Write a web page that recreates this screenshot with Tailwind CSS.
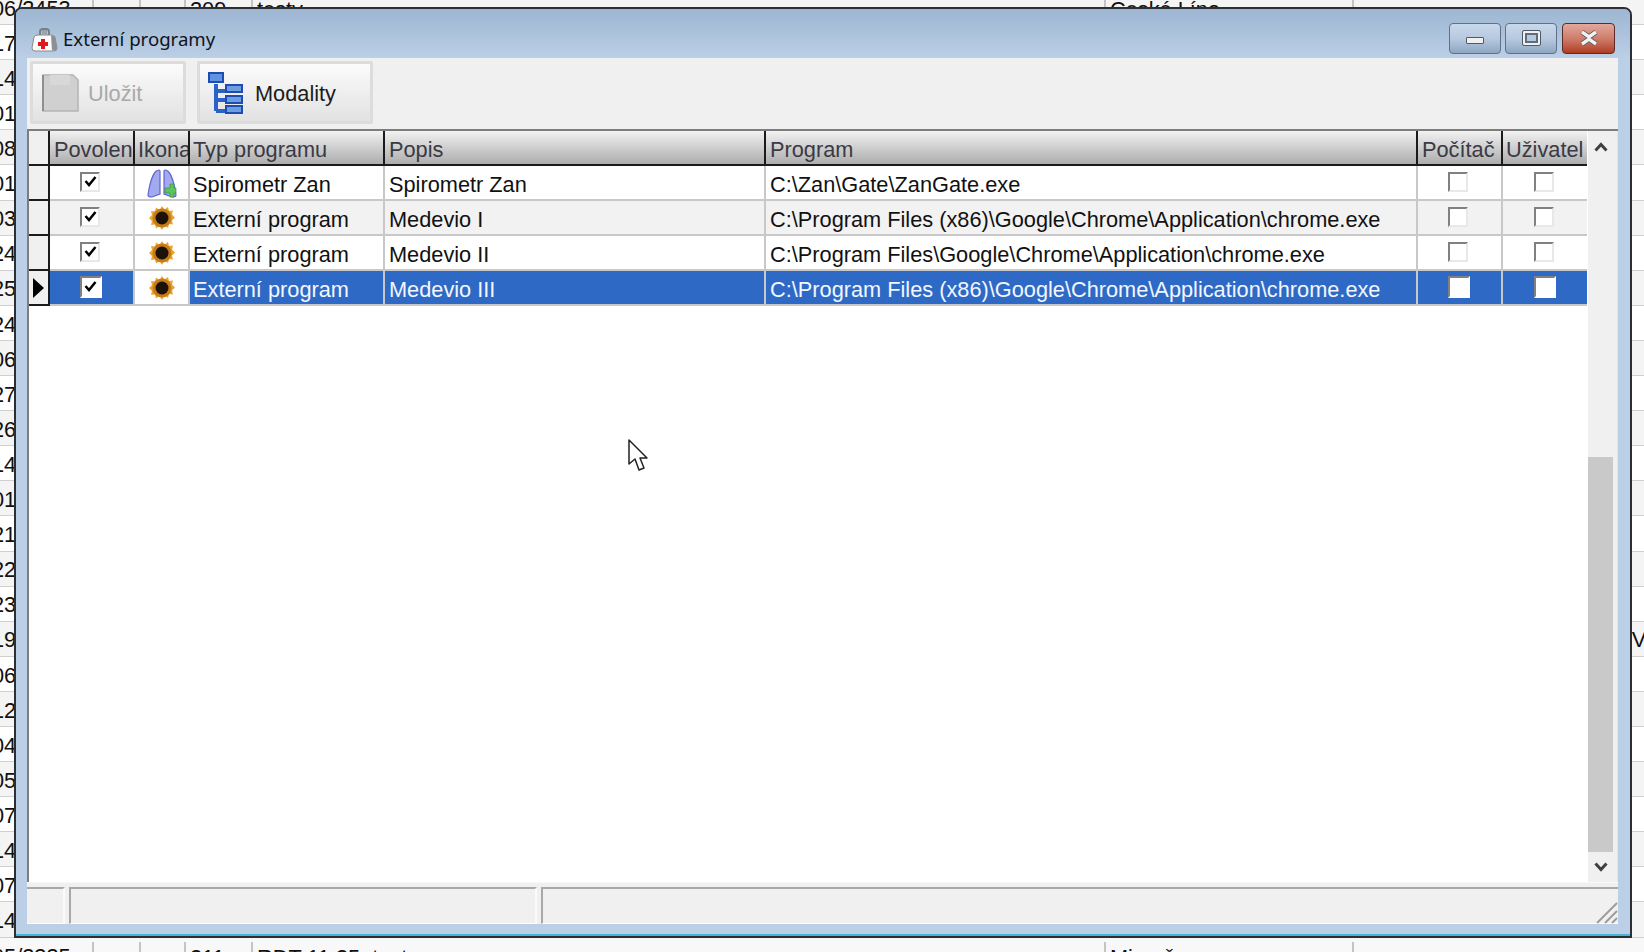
<!DOCTYPE html>
<html lang="cs">
<head>
<meta charset="utf-8">
<title>Externí programy</title>
<script src="https://cdn.jsdelivr.net/npm/@tailwindcss/browser@4"></script>
</head>
<body class="relative h-[952px] w-[1644px] overflow-hidden bg-white font-['Liberation_Sans',Arial,sans-serif] text-[21.75px] text-[#111]">

<!-- spreadsheet behind the dialog -->
<div class="-mt-[10px] flex flex-col">
  <div class="flex h-[35.1px] items-center border-b border-[#d0d0d0] bg-[#f4f4f4] pt-1"><span class="-ml-2 w-[100px]">06/2453</span><span class="w-[47px] self-stretch border-l-2 border-[#c4c4c4]"></span><span class="w-[45px] self-stretch border-l-2 border-[#c4c4c4]"></span><span class="w-[67px] self-stretch border-l-2 border-[#c4c4c4] pl-1 leading-[31px]">209</span><span class="w-[853px] self-stretch border-l-2 border-[#c4c4c4] pl-1 leading-[31px]">testy</span><span class="w-[248px] self-stretch border-l-2 border-[#c4c4c4] pl-1 leading-[31px]">České Lípa</span><span class="flex-1 self-stretch border-l-2 border-[#c4c4c4]"></span></div>
  <div class="flex h-[35.1px] items-center border-b border-[#d0d0d0] bg-white pt-1"><span class="-ml-2">17/2417</span></div>
  <div class="flex h-[35.1px] items-center border-b border-[#d0d0d0] bg-[#f4f4f4] pt-1"><span class="-ml-2">14/2414</span></div>
  <div class="flex h-[35.1px] items-center border-b border-[#d0d0d0] bg-white pt-1"><span class="-ml-2">01/2401</span></div>
  <div class="flex h-[35.1px] items-center border-b border-[#d0d0d0] bg-[#f4f4f4] pt-1"><span class="-ml-2">08/2408</span></div>
  <div class="flex h-[35.1px] items-center border-b border-[#d0d0d0] bg-white pt-1"><span class="-ml-2">01/2401</span></div>
  <div class="flex h-[35.1px] items-center border-b border-[#d0d0d0] bg-[#f4f4f4] pt-1"><span class="-ml-2">03/2403</span></div>
  <div class="flex h-[35.1px] items-center border-b border-[#d0d0d0] bg-white pt-1"><span class="-ml-2">24/2424</span></div>
  <div class="flex h-[35.1px] items-center border-b border-[#d0d0d0] bg-[#f4f4f4] pt-1"><span class="-ml-2">25/2425</span></div>
  <div class="flex h-[35.1px] items-center border-b border-[#d0d0d0] bg-white pt-1"><span class="-ml-2">24/2424</span></div>
  <div class="flex h-[35.1px] items-center border-b border-[#d0d0d0] bg-[#f4f4f4] pt-1"><span class="-ml-2">06/2406</span></div>
  <div class="flex h-[35.1px] items-center border-b border-[#d0d0d0] bg-white pt-1"><span class="-ml-2">27/2427</span></div>
  <div class="flex h-[35.1px] items-center border-b border-[#d0d0d0] bg-[#f4f4f4] pt-1"><span class="-ml-2">26/2426</span></div>
  <div class="flex h-[35.1px] items-center border-b border-[#d0d0d0] bg-white pt-1"><span class="-ml-2">14/2414</span></div>
  <div class="flex h-[35.1px] items-center border-b border-[#d0d0d0] bg-[#f4f4f4] pt-1"><span class="-ml-2">01/2401</span></div>
  <div class="flex h-[35.1px] items-center border-b border-[#d0d0d0] bg-white pt-1"><span class="-ml-2">21/2421</span></div>
  <div class="flex h-[35.1px] items-center border-b border-[#d0d0d0] bg-[#f4f4f4] pt-1"><span class="-ml-2">22/2422</span></div>
  <div class="flex h-[35.1px] items-center border-b border-[#d0d0d0] bg-white pt-1"><span class="-ml-2">23/2423</span></div>
  <div class="flex h-[35.1px] items-center justify-between border-b border-[#d0d0d0] bg-[#f4f4f4] pt-1"><span class="-ml-2">19/2419</span><span class="-mr-[7px]">Vl</span></div>
  <div class="flex h-[35.1px] items-center border-b border-[#d0d0d0] bg-white pt-1"><span class="-ml-2">06/2406</span></div>
  <div class="flex h-[35.1px] items-center border-b border-[#d0d0d0] bg-[#f4f4f4] pt-1"><span class="-ml-2">12/2412</span></div>
  <div class="flex h-[35.1px] items-center border-b border-[#d0d0d0] bg-white pt-1"><span class="-ml-2">04/2404</span></div>
  <div class="flex h-[35.1px] items-center border-b border-[#d0d0d0] bg-[#f4f4f4] pt-1"><span class="-ml-2">05/2405</span></div>
  <div class="flex h-[35.1px] items-center border-b border-[#d0d0d0] bg-white pt-1"><span class="-ml-2">07/2407</span></div>
  <div class="flex h-[35.1px] items-center border-b border-[#d0d0d0] bg-[#f4f4f4] pt-1"><span class="-ml-2">14/2414</span></div>
  <div class="flex h-[35.1px] items-center border-b border-[#d0d0d0] bg-white pt-1"><span class="-ml-2">07/2407</span></div>
  <div class="flex h-[35.1px] items-center border-b border-[#d0d0d0] bg-[#f4f4f4] pt-1"><span class="-ml-2">14/2414</span></div>
  <div class="flex h-[35.1px] items-center bg-[#f8f8f8] pt-1"><span class="-ml-2 w-[100px]">05/2335</span><span class="w-[47px] self-stretch border-l-2 border-[#c4c4c4]"></span><span class="w-[45px] self-stretch border-l-2 border-[#c4c4c4]"></span><span class="w-[67px] self-stretch border-l-2 border-[#c4c4c4] pl-1 leading-[31px]">211</span><span class="w-[853px] self-stretch border-l-2 border-[#c4c4c4] pl-1 leading-[31px]">RDT 11:35, testy</span><span class="w-[248px] self-stretch border-l-2 border-[#c4c4c4] pl-1 leading-[31px]">Mimoň</span><span class="flex-1 self-stretch border-l-2 border-[#c4c4c4]"></span></div>
</div>

<!-- dialog window -->
<div class="absolute left-[14px] top-[7px] flex h-[931px] w-[1618px] flex-col rounded-t-[8px] border-2 border-[#2b2f33] bg-[#bbcfe6]">
  <!-- title bar -->
  <div class="flex h-[49px] shrink-0 items-center rounded-t-[6px] bg-gradient-to-b from-[#9db6d2] to-[#bbcfe6] pl-[15px] pr-[15px] pt-[12px]">
    <svg class="h-[26px] w-[27px]" viewBox="0 0 27 26">
      <path d="M9 9V4.5Q9 2 12 2h3q3 0 3 2.500V9" fill="none" stroke="#77808a" stroke-width="2"/>
      <rect x="11" y="3" width="5" height="4" fill="#9aa3ad"/>
      <path d="M3 10Q4 8 7 8h13q3 0 4 2l2 11q0 3-3 3H4q-3 0-3-3z" fill="#fbfbfb" stroke="#8a8a8a"/>
      <path d="M20 8.500h1q2 0 3 2l2 10q0 3-3 3h-2z" fill="#8c8f94"/>
      <path d="M10 12h4v3h3v4h-3v3h-4v-3H7v-4h3z" fill="#e0191c"/>
    </svg>
    <span class="ml-[5px] font-['Noto_Sans',sans-serif] text-[18.6px] leading-none text-[#10141c]">Externí programy</span>
    <div class="ml-auto mt-[2px] flex items-start gap-[4px] self-start">
      <div class="flex h-[31px] w-[52px] items-center justify-center rounded-[4px] border border-[#5f7186] bg-gradient-to-b from-[#c9d8ea] via-[#b7c9df] via-50% to-[#8fa6c2]">
        <span class="mt-[4px] block h-[7px] w-[18px] rounded-[1px] border border-[#4f5963] bg-[#f0f0f0]"></span>
      </div>
      <div class="flex h-[31px] w-[52px] items-center justify-center rounded-[4px] border border-[#5f7186] bg-gradient-to-b from-[#c9d8ea] via-[#b7c9df] via-50% to-[#8fa6c2]">
        <span class="-mt-[2px] block h-[14px] w-[17px] rounded-[1px] border-2 border-[#eef0f2] bg-[#5d6c7e] p-[2px] outline outline-[#4f5963]"><span class="block h-full w-full bg-[#b7c9df]"></span></span>
      </div>
      <div class="ml-[1px] flex h-[31px] w-[53px] items-center justify-center rounded-[4px] border border-[#5e2b2b] bg-gradient-to-b from-[#e0a89c] via-[#cf7d6b] via-50% to-[#ae3c22]">
        <svg class="-mt-[2px] h-[16px] w-[20px]" viewBox="0 0 20 16"><path d="M3 2l7 5 7-5M3 14l7-5 7 5" fill="none" stroke="#4b4f58" stroke-width="5"/><path d="M3 2l7 5 7-5M3 14l7-5 7 5M10 7v2" fill="none" stroke="#f2f2f2" stroke-width="3.400"/></svg>
      </div>
    </div>
  </div>

  <!-- client area -->
  <div class="ml-[11px] flex h-[866px] w-[1591px] flex-col bg-[#f0f0f0]">
    <!-- toolbar -->
    <div class="flex h-[71px] shrink-0 items-start gap-[11px] pl-[3px] pt-[3px]">
      <div class="flex h-[63px] w-[156px] items-center rounded-[2px] border-[3px] border-[#dcdcdc] bg-gradient-to-b from-[#fbfbfb] to-[#e2e2e2] pl-[9px]">
        <svg class="h-[38px] w-[37px]" viewBox="0 0 37 38"><path d="M1 1h30l5 5v31H1z" fill="#d0d0d0" stroke="#b4b4b4" stroke-width="1.500"/><path d="M1 1v36" stroke="#8f8f8f" stroke-width="2"/><path d="M8 1v10h20V1" fill="#d8d8d8"/></svg>
        <span class="ml-[9px] pt-[4px] text-[#a9a9a9]">Uložit</span>
      </div>
      <div class="flex h-[63px] w-[176px] items-center rounded-[2px] border-[3px] border-[#dcdcdc] bg-gradient-to-b from-[#fbfbfb] to-[#e2e2e2] pl-[8px]">
        <svg class="h-[42px] w-[36px]" viewBox="0 0 36 42">
          <path d="M8 12v27M8 19h10M8 28h10M8 39h10" fill="none" stroke="#2b62c8" stroke-width="4"/>
          <rect x="1" y="1" width="14" height="9" fill="#5f94e0" stroke="#1f4cb0" stroke-width="2"/>
          <rect x="18" y="13" width="16" height="7" fill="#6d9ee2" stroke="#1f4cb0" stroke-width="2"/>
          <rect x="18" y="24" width="16" height="7" fill="#6d9ee2" stroke="#1f4cb0" stroke-width="2"/>
          <rect x="18" y="34" width="16" height="7" fill="#6d9ee2" stroke="#1f4cb0" stroke-width="2"/>
        </svg>
        <span class="ml-[11px] pt-[4px] text-[#1c1c1c]">Modality</span>
      </div>
    </div>

    <!-- data grid -->
    <div class="flex h-[753px] shrink-0 border-l-2 border-t-2 border-[#7d7d7d] bg-white">
      <div class="w-[1558px] shrink-0">
        <div class="grid h-[35px] grid-cols-[21px_85px_55px_195px_381px_652px_85px_84px] border-b-2 border-[#1b1b1b] leading-[29px] text-[#3a3a44]">
          <div class="border-r-2 border-[#1b1b1b] bg-[#f0f0f0]"></div>
          <div class="overflow-hidden whitespace-nowrap border-r-2 border-[#1b1b1b] bg-gradient-to-b from-[#f2f2f2] to-[#adadad] pl-[4px] pt-[4px]">Povolené</div>
          <div class="overflow-hidden whitespace-nowrap border-r-2 border-[#1b1b1b] bg-gradient-to-b from-[#f2f2f2] to-[#adadad] pl-[3px] pt-[4px]">Ikona</div>
          <div class="overflow-hidden whitespace-nowrap border-r-2 border-[#1b1b1b] bg-gradient-to-b from-[#f2f2f2] to-[#adadad] pl-[3px] pt-[4px]">Typ programu</div>
          <div class="overflow-hidden whitespace-nowrap border-r-2 border-[#1b1b1b] bg-gradient-to-b from-[#f2f2f2] to-[#adadad] pl-[4px] pt-[4px]">Popis</div>
          <div class="overflow-hidden whitespace-nowrap border-r-2 border-[#1b1b1b] bg-gradient-to-b from-[#f2f2f2] to-[#adadad] pl-[4px] pt-[4px]">Program</div>
          <div class="overflow-hidden whitespace-nowrap border-r-2 border-[#1b1b1b] bg-gradient-to-b from-[#f2f2f2] to-[#adadad] pl-[4px] pt-[4px]">Počítač</div>
          <div class="overflow-hidden whitespace-nowrap bg-gradient-to-b from-[#f2f2f2] to-[#adadad] pl-[3px] pt-[4px]">Uživatel</div>
        </div>

        <!-- row 1 -->
        <div class="grid h-[35px] grid-cols-[21px_85px_55px_195px_381px_652px_85px_84px] border-b-2 border-[#c8c8c8] bg-white leading-[29px] text-[#111]">
          <div class="-mb-[2px] border-b-2 border-r-2 border-[#1b1b1b] bg-[#f0f0f0]"></div>
          <div class="flex items-center justify-center border-r-2 border-[#c8c8c8] pb-[2px] pr-[3px]"><span class="flex h-[20px] w-[20px] items-center justify-center border-2 border-b-[#e8e8e8] border-l-[#808080] border-r-[#e8e8e8] border-t-[#808080] bg-white"><svg class="h-[13px] w-[13px]" viewBox="0 0 13 13"><path d="M1.500 6l3.500 4 6.500-8" fill="none" stroke="#000" stroke-width="2.500"/></svg></span></div>
          <div class="flex items-center justify-center border-r-2 border-[#c8c8c8]">
            <svg class="h-[32px] w-[30px]" viewBox="0 0 30 32"><path d="M12 3C7 3 3 14 1 28c0 2 2 2 4 2l8-3V5q0-2-1-2zM18 3c5 0 9 11 11 25 0 2-2 2-4 2l-8-3V5q0-2 1-2z" fill="#a3a9ee" stroke="#5f66cf" stroke-width="1.200"/><path d="M19 21h5v-4h4v4h2v5h-2v4h-4v-4h-5z" transform="translate(-1 0)" fill="#5cc45a" stroke="#2e8f3c" stroke-width=".6"/></svg>
          </div>
          <div class="border-r-2 border-[#c8c8c8] pl-[3px] pt-[4px]">Spirometr Zan</div>
          <div class="border-r-2 border-[#c8c8c8] pl-[4px] pt-[4px]">Spirometr Zan</div>
          <div class="border-r-2 border-[#c8c8c8] pl-[4px] pt-[4px]">C:\Zan\Gate\ZanGate.exe</div>
          <div class="flex items-center justify-center border-r-2 border-[#c8c8c8] pb-[2px] pr-[3px]"><span class="h-[20px] w-[20px] border-2 border-b-[#e8e8e8] border-l-[#808080] border-r-[#e8e8e8] border-t-[#808080] bg-white"></span></div>
          <div class="flex items-center justify-center pb-[2px] pr-[2px]"><span class="h-[20px] w-[20px] border-2 border-b-[#e8e8e8] border-l-[#808080] border-r-[#e8e8e8] border-t-[#808080] bg-white"></span></div>
        </div>

        <!-- row 2 -->
        <div class="grid h-[35px] grid-cols-[21px_85px_55px_195px_381px_652px_85px_84px] border-b-2 border-[#c8c8c8] bg-[#f2f2f2] leading-[29px] text-[#111]">
          <div class="-mb-[2px] border-b-2 border-r-2 border-[#1b1b1b] bg-[#f0f0f0]"></div>
          <div class="flex items-center justify-center border-r-2 border-[#c8c8c8] pb-[2px] pr-[3px]"><span class="flex h-[20px] w-[20px] items-center justify-center border-2 border-b-[#e8e8e8] border-l-[#808080] border-r-[#e8e8e8] border-t-[#808080] bg-white"><svg class="h-[13px] w-[13px]" viewBox="0 0 13 13"><path d="M1.500 6l3.500 4 6.500-8" fill="none" stroke="#000" stroke-width="2.500"/></svg></span></div>
          <div class="flex items-center justify-center border-r-2 border-[#c8c8c8] bg-white pl-[1px]">
            <svg class="h-[26px] w-[26px]" viewBox="0 0 26 26"><path d="M13 1l2.500 3.500L19 2l1 4 4-.5-1 4 3 3-3 3 1 4-4-.5-1 4-3.500-2.500L13 25l-2.500-4L7 23.500l-1-4-4 .5 1-4-3-3 3-3-1-4 4 .5 1-4 3.500 2.500z" fill="#eba52e"/><circle cx="13" cy="13" r="9.500" fill="#c77c1c"/><circle cx="13" cy="13" r="6.500" fill="#1d1208"/></svg>
          </div>
          <div class="border-r-2 border-[#c8c8c8] pl-[3px] pt-[4px]">Externí program</div>
          <div class="border-r-2 border-[#c8c8c8] pl-[4px] pt-[4px]">Medevio I</div>
          <div class="whitespace-nowrap border-r-2 border-[#c8c8c8] pl-[4px] pt-[4px]">C:\Program Files (x86)\Google\Chrome\Application\chrome.exe</div>
          <div class="flex items-center justify-center border-r-2 border-[#c8c8c8] pb-[2px] pr-[3px]"><span class="h-[20px] w-[20px] border-2 border-b-[#e8e8e8] border-l-[#808080] border-r-[#e8e8e8] border-t-[#808080] bg-white"></span></div>
          <div class="flex items-center justify-center pb-[2px] pr-[2px]"><span class="h-[20px] w-[20px] border-2 border-b-[#e8e8e8] border-l-[#808080] border-r-[#e8e8e8] border-t-[#808080] bg-white"></span></div>
        </div>

        <!-- row 3 -->
        <div class="grid h-[35px] grid-cols-[21px_85px_55px_195px_381px_652px_85px_84px] border-b-2 border-[#c8c8c8] bg-white leading-[29px] text-[#111]">
          <div class="-mb-[2px] border-b-2 border-r-2 border-[#1b1b1b] bg-[#f0f0f0]"></div>
          <div class="flex items-center justify-center border-r-2 border-[#c8c8c8] pb-[2px] pr-[3px]"><span class="flex h-[20px] w-[20px] items-center justify-center border-2 border-b-[#e8e8e8] border-l-[#808080] border-r-[#e8e8e8] border-t-[#808080] bg-white"><svg class="h-[13px] w-[13px]" viewBox="0 0 13 13"><path d="M1.500 6l3.500 4 6.500-8" fill="none" stroke="#000" stroke-width="2.500"/></svg></span></div>
          <div class="flex items-center justify-center border-r-2 border-[#c8c8c8] pl-[1px]">
            <svg class="h-[26px] w-[26px]" viewBox="0 0 26 26"><path d="M13 1l2.500 3.500L19 2l1 4 4-.5-1 4 3 3-3 3 1 4-4-.5-1 4-3.500-2.500L13 25l-2.500-4L7 23.500l-1-4-4 .5 1-4-3-3 3-3-1-4 4 .5 1-4 3.500 2.500z" fill="#eba52e"/><circle cx="13" cy="13" r="9.500" fill="#c77c1c"/><circle cx="13" cy="13" r="6.500" fill="#1d1208"/></svg>
          </div>
          <div class="border-r-2 border-[#c8c8c8] pl-[3px] pt-[4px]">Externí program</div>
          <div class="border-r-2 border-[#c8c8c8] pl-[4px] pt-[4px]">Medevio II</div>
          <div class="whitespace-nowrap border-r-2 border-[#c8c8c8] pl-[4px] pt-[4px]">C:\Program Files\Google\Chrome\Application\chrome.exe</div>
          <div class="flex items-center justify-center border-r-2 border-[#c8c8c8] pb-[2px] pr-[3px]"><span class="h-[20px] w-[20px] border-2 border-b-[#e8e8e8] border-l-[#808080] border-r-[#e8e8e8] border-t-[#808080] bg-white"></span></div>
          <div class="flex items-center justify-center pb-[2px] pr-[2px]"><span class="h-[20px] w-[20px] border-2 border-b-[#e8e8e8] border-l-[#808080] border-r-[#e8e8e8] border-t-[#808080] bg-white"></span></div>
        </div>

        <!-- row 4 (selected) -->
        <div class="grid h-[35px] grid-cols-[21px_85px_55px_195px_381px_652px_85px_84px] border-b-2 border-[#c8c8c8] bg-[#2e6ac5] leading-[29px] text-[#f2f6ff]">
          <div class="-mb-[2px] flex items-center justify-center border-b-2 border-r-2 border-[#1b1b1b] bg-[#f0f0f0]"><svg class="h-[20px] w-[11px]" viewBox="0 0 11 20"><path d="M0 0l11 10L0 20z" fill="#000"/></svg></div>
          <div class="flex items-center justify-center border-r-2 border-[#c8c8c8] pb-[2px] pr-[2px]"><span class="flex h-[22px] w-[22px] items-center justify-center border-2 border-b-white border-l-[#808080] border-r-white border-t-[#808080] bg-white"><svg class="h-[13px] w-[13px]" viewBox="0 0 13 13"><path d="M1.500 6l3.500 4 6.500-8" fill="none" stroke="#000" stroke-width="2.500"/></svg></span></div>
          <div class="flex items-center justify-center border-r-2 border-[#c8c8c8] bg-white pl-[1px]">
            <svg class="h-[26px] w-[26px]" viewBox="0 0 26 26"><path d="M13 1l2.500 3.500L19 2l1 4 4-.5-1 4 3 3-3 3 1 4-4-.5-1 4-3.500-2.500L13 25l-2.500-4L7 23.500l-1-4-4 .5 1-4-3-3 3-3-1-4 4 .5 1-4 3.500 2.500z" fill="#eba52e"/><circle cx="13" cy="13" r="9.500" fill="#c77c1c"/><circle cx="13" cy="13" r="6.500" fill="#1d1208"/></svg>
          </div>
          <div class="border-r-2 border-[#c8c8c8] pl-[3px] pt-[4px]">Externí program</div>
          <div class="border-r-2 border-[#c8c8c8] pl-[4px] pt-[4px]">Medevio III</div>
          <div class="whitespace-nowrap border-r-2 border-[#c8c8c8] pl-[4px] pt-[4px]">C:\Program Files (x86)\Google\Chrome\Application\chrome.exe</div>
          <div class="flex items-center justify-center border-r-2 border-[#c8c8c8] pb-[2px] pr-[2px]"><span class="h-[22px] w-[22px] border-2 border-b-white border-l-[#808080] border-r-white border-t-[#808080] bg-white"></span></div>
          <div class="flex items-center justify-center pb-[2px] pr-[1px]"><span class="h-[22px] w-[22px] border-2 border-b-white border-l-[#808080] border-r-white border-t-[#808080] bg-white"></span></div>
        </div>
      </div>

      <!-- scrollbar -->
      <div class="ml-[1px] w-[29px] shrink-0 bg-[#f0f0f0]">
        <div class="flex w-[25px] flex-col items-center">
          <svg class="mt-[11px] h-[10px] w-[14px]" viewBox="0 0 14 10"><path d="M1.500 8.500L7 2.500l5.500 6" fill="none" stroke="#404040" stroke-width="3"/></svg>
          <div class="mt-[305px] h-[395px] w-full bg-[#c9c9c9]"></div>
          <svg class="mt-[10px] h-[10px] w-[14px]" viewBox="0 0 14 10"><path d="M1.500 1.500L7 7.500l5.500-6" fill="none" stroke="#404040" stroke-width="3"/></svg>
        </div>
      </div>
      <div class="w-[1px] shrink-0 bg-[#e4e4e4]"></div>
    </div>

    <!-- status bar -->
    <div class="relative flex flex-1 items-stretch gap-[4px] border-t border-[#f8f8f8] pt-[4px]">
      <div class="w-[38px] border-b border-r-2 border-t-2 border-b-white border-r-[#fafafa] border-t-[#a8a8a8]"></div>
      <div class="w-[468px] border-b border-l-2 border-r-2 border-t-2 border-b-white border-l-[#a8a8a8] border-r-[#fafafa] border-t-[#a8a8a8]"></div>
      <div class="flex-1 border-b border-l-2 border-t-2 border-b-white border-l-[#a8a8a8] border-t-[#a8a8a8]"></div>
      <svg class="absolute bottom-0 right-0 h-[22px] w-[22px]" viewBox="0 0 22 22"><path d="M21 1L1 21M21 9L9 21M21 16L16 21" stroke="#9a9a9a" stroke-width="1.800"/></svg>
    </div>
  </div>
  <div class="mt-auto h-[2px] bg-[#45b6d6]"></div>
</div>

<!-- mouse pointer -->
<svg class="absolute left-[627px] top-[438px] h-[34px] w-[22px]" viewBox="0 0 22 34"><path d="M2 2v24l6-5 4 11 5-2-4-10h7z" fill="#fff" stroke="#222" stroke-width="1.500" stroke-linejoin="round"/></svg>

</body>
</html>
